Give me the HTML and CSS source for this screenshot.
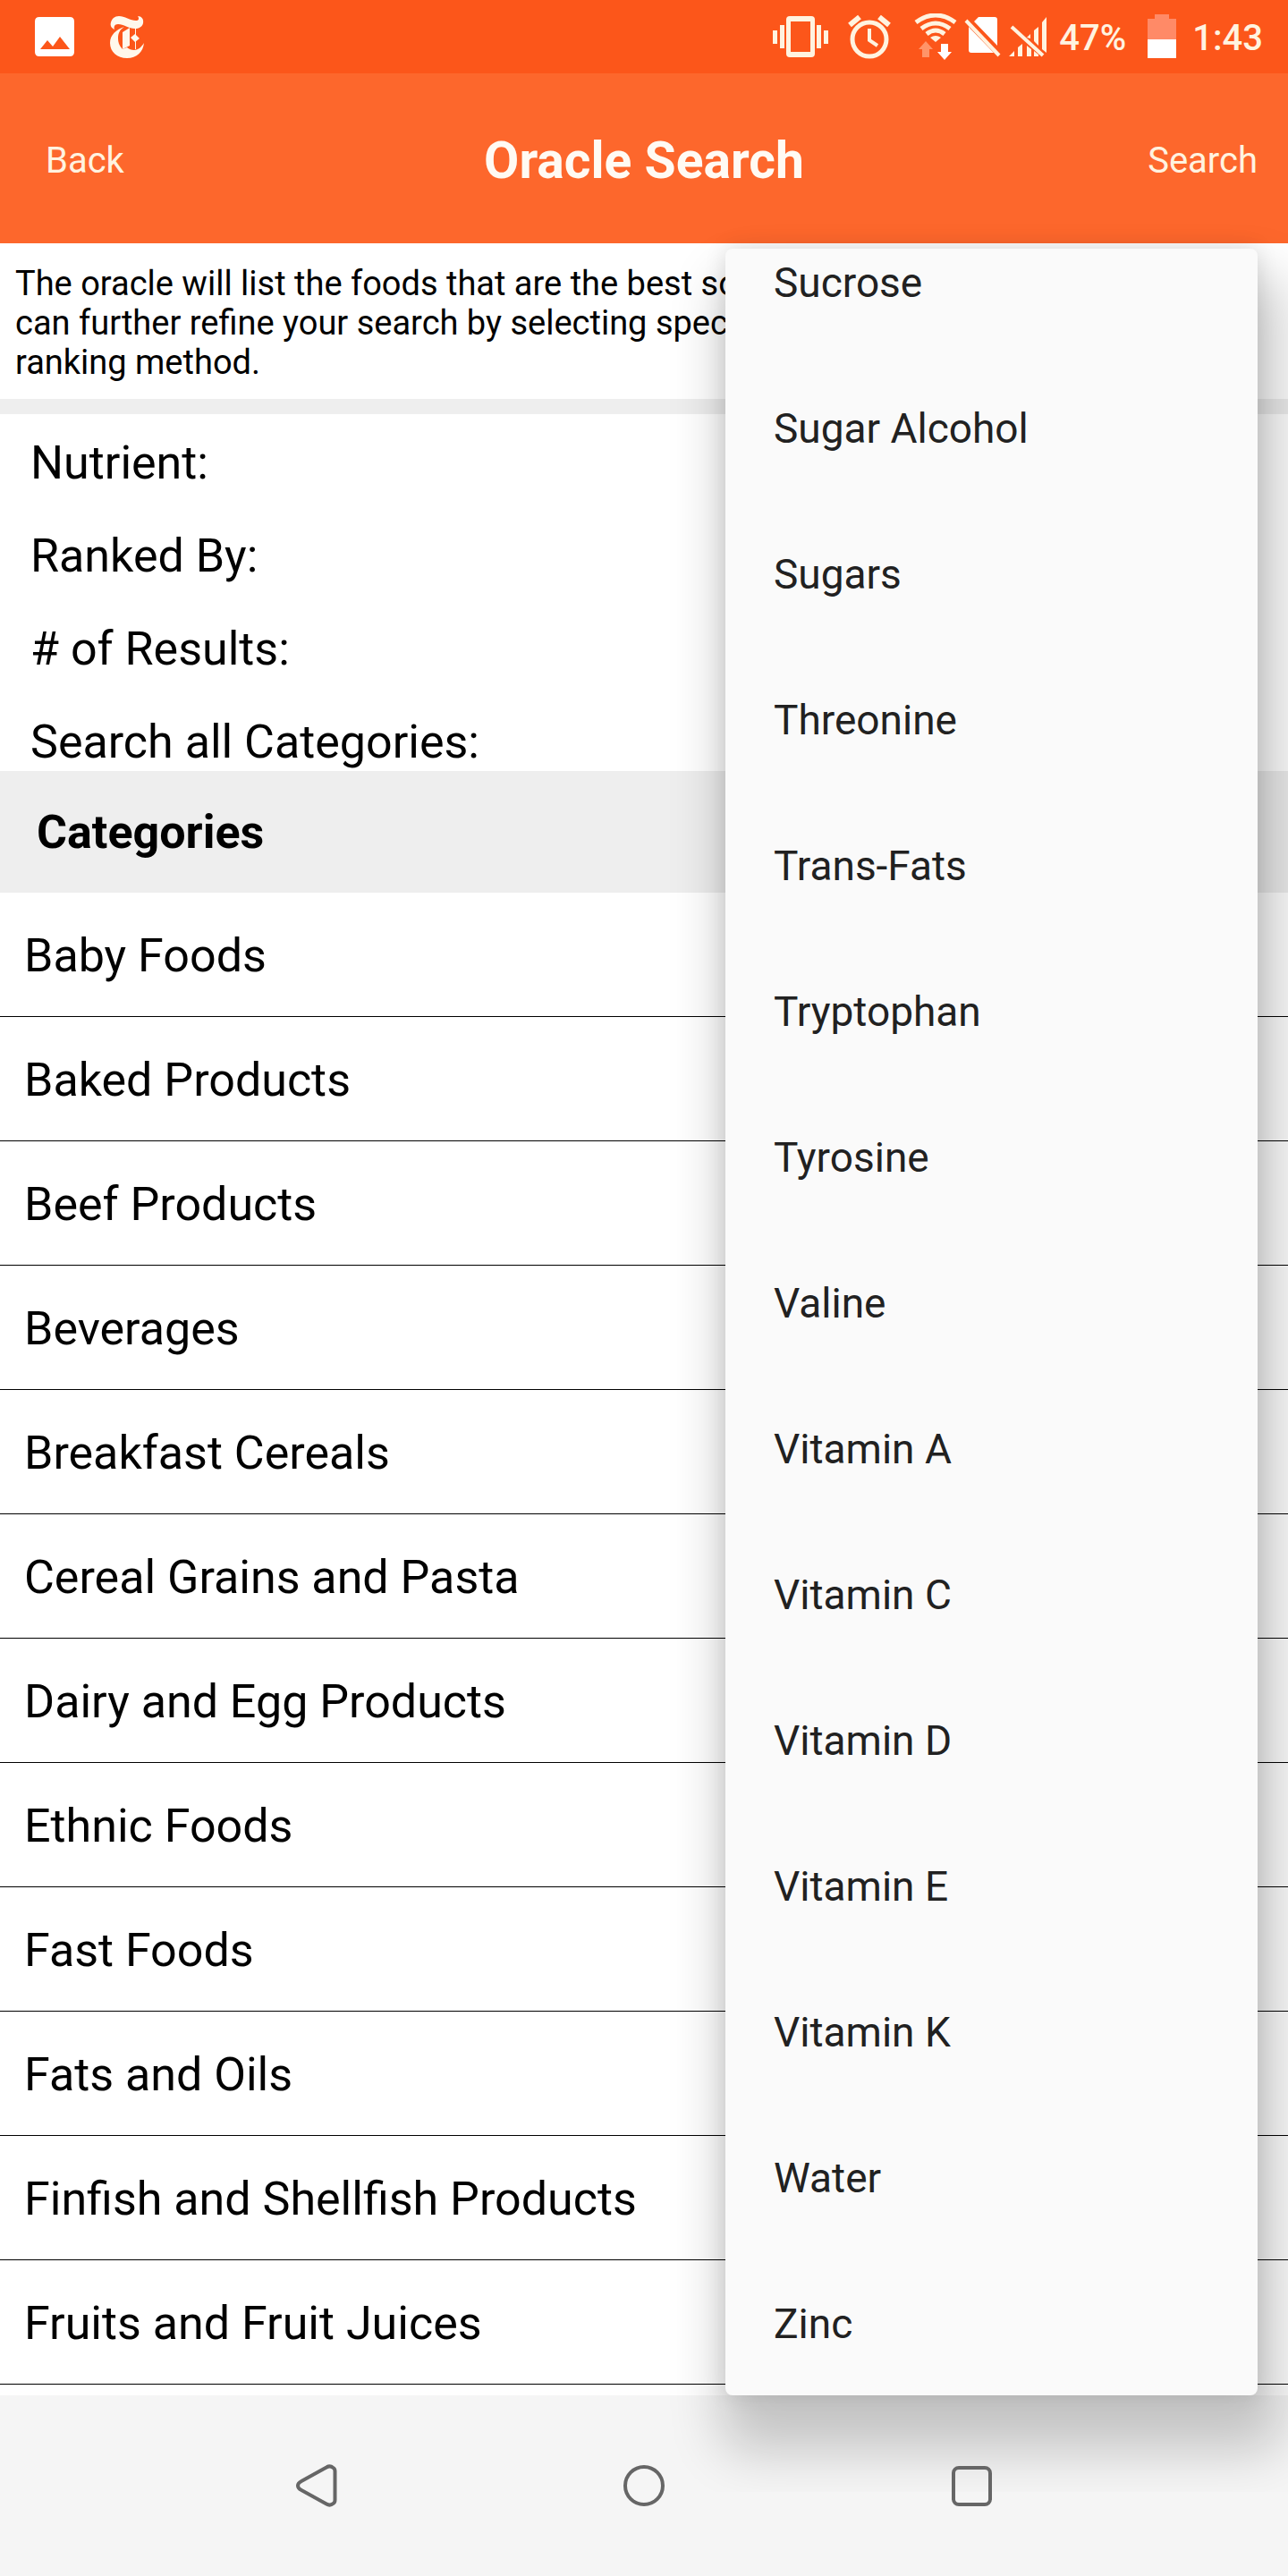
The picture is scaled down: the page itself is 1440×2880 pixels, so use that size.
FILE: index.html
```html
<!DOCTYPE html>
<html lang="en">
<head>
  <meta charset="UTF-8" />
  <title>Oracle Search</title>
  <meta name="viewport" content="width=device-width, initial-scale=1.0" />
  <link rel="stylesheet" href="styles.css">
</head>
<body>

  <div class="status-bar">
    <div class="status-left">
      <svg width="44" height="44" viewBox="0 0 44 44" fill="#fff"><path fill-rule="evenodd" d="M5 0H39Q44 0 44 5V39Q44 44 39 44H5Q0 44 0 39V5Q0 0 5 0ZM6 36H39L28 22L20 33L14 26Z"/></svg>
      <svg width="40" height="48" viewBox="0 0 40 48" fill="#fff8ec">
        <path d="M10 1C16 1 23 6 29 6C32 6 33 4 31 1C35 1 38 4 37 9C36 13 32 15 28 15C21 15 15 10 9 10C5 10 4 13 5 16C1 14 0 11 1 8C2 4 5 1 10 1Z"/>
        <path d="M16 13C7 16 0 22 0 31C0 41 8 48 19 48C30 48 37 41 38 31C35 36 31 39 27 39C24 39 21 38 19 36L14 38C10 34 9 30 9 26C9 20 11 16 16 13Z"/>
        <path d="M14 19L22 14V34L14 38ZM23 25L28 21L33 26L28 30Z"/>
        <path d="M28 13H29V38H28Z"/>
      </svg>
    </div>
    <div class="status-right">
      <svg class="vibrate" width="62" height="48" viewBox="0 0 62 48" fill="#fff3e0">
        <path fill-rule="evenodd" d="M19 1H43Q47 1 47 5V43Q47 47 43 47H19Q15 47 15 43V5Q15 1 19 1ZM20 7V41H42V7Z"/>
        <path d="M0 17H5V32H0ZM8 11H13V37H8ZM49 11H54V37H49ZM57 17H62V32H57Z"/>
      </svg>
      <svg class="alarm" width="48" height="50" viewBox="0 0 48 50" fill="none" stroke="#fff3e0">
        <circle cx="24" cy="28" r="19" stroke-width="5"/>
        <path d="M24 16V29L33 35" stroke-width="4"/>
        <path d="M2 12L13 3M35 3L46 12" stroke-width="6"/>
      </svg>
      <svg class="wifi" width="48" height="52" viewBox="0 0 48 52" fill="none">
        <path d="M2 10Q24 -6 46 10M8 17Q24 5 40 17M14 23Q24 15 34 23" stroke="#fff3e0" stroke-width="5"/>
        <path d="M18 27Q24 23 30 27L24 32Z" fill="#fff3e0"/>
        <path d="M13 31L21 40H17V49H9V40H5Z" fill="#ff9468"/>
        <path d="M30 34H38V43H42L34 52L26 43H30Z" fill="#fff"/>
      </svg>
      <svg class="no-sim" width="42" height="46" viewBox="0 0 42 46" fill="#fff">
        <path d="M11 6L16 1H34Q37 1 37 4V33ZM5 12L33 41H8Q5 41 5 38Z"/>
        <path d="M2 5L39 44" stroke="#fff3e0" stroke-width="4"/>
      </svg>
      <svg class="signal" width="44" height="46" viewBox="0 0 44 46" fill="#fff3e0">
        <path d="M0 45L6 39V45ZM10 35L15 31V45H10ZM20 33L25 37V45H20ZM28 39L33 43V45H28ZM20 24L24 20V25ZM28 16L33 12V33L28 28ZM37 7L42 1V41L37 37Z"/>
        <path d="M3 12L38 44" fill="none" stroke="#fff3e0" stroke-width="4"/>
      </svg>
      <span class="battery-text">47%</span>
      <svg class="battery" width="32" height="50" viewBox="0 0 32 50">
        <path fill="#ff8a67" d="M8 0H24V5H32V28H0V5H8Z"/>
        <path fill="#fff" d="M0 28H32V49H0Z"/>
      </svg>
      <span class="clock">1:43</span>
    </div>
  </div>

  <header class="header">
    <button class="header-btn back-btn">Back</button>
    <h1>Oracle Search</h1>
    <button class="header-btn search-btn">Search</button>
  </header>

  <main>
    <p class="intro">The oracle will list the foods that are the best sources of a nutrient. You<br>can further refine your search by selecting specific categories and the<br>ranking method.</p>

    <div class="options">
      <div id="nutrient-label">Nutrient:</div>
      <div>Ranked By:</div>
      <div># of Results:</div>
      <div>Search all Categories:</div>
    </div>

    <h2>Categories</h2>
    <ul class="categories">
      <li>Baby Foods</li>
      <li>Baked Products</li>
      <li>Beef Products</li>
      <li>Beverages</li>
      <li>Breakfast Cereals</li>
      <li>Cereal Grains and Pasta</li>
      <li>Dairy and Egg Products</li>
      <li>Ethnic Foods</li>
      <li>Fast Foods</li>
      <li>Fats and Oils</li>
      <li>Finfish and Shellfish Products</li>
      <li>Fruits and Fruit Juices</li>
    </ul>

    <div class="menu" role="listbox" aria-labelledby="nutrient-label">
      <button role="option">Sucrose</button>
      <button role="option">Sugar Alcohol</button>
      <button role="option">Sugars</button>
      <button role="option">Threonine</button>
      <button role="option">Trans-Fats</button>
      <button role="option">Tryptophan</button>
      <button role="option">Tyrosine</button>
      <button role="option">Valine</button>
      <button role="option">Vitamin A</button>
      <button role="option">Vitamin C</button>
      <button role="option">Vitamin D</button>
      <button role="option">Vitamin E</button>
      <button role="option">Vitamin K</button>
      <button role="option">Water</button>
      <button role="option">Zinc</button>
    </div>
  </main>

  <nav class="nav-bar">
    <button aria-label="Back">
      <svg width="48" height="48" viewBox="-1 0 48 48"><path d="M34 3.500Q38 1 41.500 4Q43.500 5 43.500 8V40Q43.500 43 41.500 44Q38 47 34 44.500L6 29Q2 27 2 24Q2 21 6 19Z"/></svg>
    </button>
    <button aria-label="Home">
      <svg width="48" height="48" viewBox="0 0 48 48"><circle cx="24" cy="24" r="21"/></svg>
    </button>
    <button aria-label="Recent apps">
      <svg width="48" height="48" viewBox="0 0 48 48"><rect x="4" y="4" width="41" height="41" rx="6"/></svg>
    </button>
  </nav>

</body>
</html>
```
FILE: styles.css
```css
* {
  box-sizing: border-box;
}

body {
  margin: 0;
  min-height: 100vh;
  display: flex;
  flex-direction: column;
  font-family: Roboto, "Liberation Sans", sans-serif;
  color: #000;
  background: #fff;
}

button {
  border: none;
  padding: 0;
  background: none;
  font-family: inherit;
  cursor: pointer;
}

h1, h2, p, ul {
  margin: 0;
  padding: 0;
}

.status-bar {
  height: 82px;
  padding: 0 28px 0 39px;
  display: flex;
  align-items: center;
  justify-content: space-between;
  background: #fc561a;
}

.status-left, .status-right {
  display: flex;
  align-items: center;
}

.status-left {
  gap: 40px;
}

.vibrate { margin-right: 22px; }
.alarm { margin-right: 26px; }
.wifi { margin-right: 8px; }
.no-sim { margin-right: 8px; }
.signal { margin-right: 12px; }
.battery { margin-right: 18px; }

.battery-text, .clock {
  font-size: 40px;
  font-weight: 500;
  line-height: 48px;
  padding-top: 4px;
  color: #fff3e0;
}

.battery-text {
  margin-right: 24px;
}

.header {
  height: 190px;
  padding: 0 34px;
  display: grid;
  grid-template-columns: 1fr auto 1fr;
  align-items: center;
  background: #fd672c;
}

.header h1 {
  font-size: 57px;
  font-weight: bold;
  line-height: 64px;
  padding-top: 6px;
  color: #fffaf3;
}

.header-btn {
  font-size: 40px;
  line-height: 48px;
  padding-top: 6px;
  color: #fff3e0;
}

.back-btn {
  justify-self: start;
  margin-left: 17px;
}

.search-btn {
  justify-self: end;
}

main {
  position: relative;
  flex: 1;
}

.intro {
  padding: 23px 17px 19px;
  border-bottom: 17px solid #eee;
  font-size: 38px;
  line-height: 44px;
  white-space: nowrap;
}

.options {
  display: flex;
  flex-direction: column;
  gap: 44px;
  padding: 25px 34px 2px;
  font-size: 52px;
  line-height: 60px;
}

h2 {
  padding: 2px 41px 0;
  font-size: 52px;
  line-height: 134px;
  background: #eee;
}

.categories {
  list-style: none;
}

.categories li {
  padding: 4px 27px 0;
  border-bottom: 1px solid #000;
  font-size: 52px;
  line-height: 134px;
}

/* open nutrient list, scrolled to its end */
.menu {
  position: absolute;
  top: 6px;
  right: 34px;
  bottom: 0;
  width: 595px;
  display: flex;
  flex-direction: column;
  justify-content: flex-end;
  overflow: hidden;
  border-radius: 8px;
  background: #fafafa;
  box-shadow: 0 0 24px rgba(0, 0, 0, 0.12), 12px 46px 60px 16px rgba(0, 0, 0, 0.2);
  clip-path: inset(-100px -34px -108px -100px);
}

.menu button {
  flex: none;
  height: 163px;
  padding: 2px 0 0 54px;
  text-align: left;
  font-size: 46px;
  color: #212121;
}

.nav-bar {
  height: 202px;
  padding: 0 171px;
  display: grid;
  grid-template-columns: repeat(3, 1fr);
  background: #f5f5f5;
}

.nav-bar button {
  display: flex;
  align-items: center;
  justify-content: center;
}

.nav-bar svg {
  position: relative;
  z-index: 1;
  fill: none;
  stroke: #666;
  stroke-width: 4;
}
```
